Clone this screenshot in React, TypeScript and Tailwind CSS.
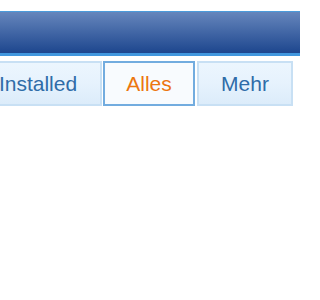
import React from 'react';

const tabs = [
  { label: 'Installed', width: 'w-[128px]', active: false },
  { label: 'Alles', width: 'w-[92px]', active: true },
  { label: 'Mehr', width: 'w-[96px]', active: false },
];

const App: React.FC = () => {
  return (
    <div className="w-[300px] h-[300px] overflow-hidden bg-white font-['Liberation_Sans',Arial,sans-serif]">
      {/* Header bar */}
      <div className="mt-[11px] h-[45px] border-t border-t-[#4b9bdb] border-b-[3px] border-b-[#4197de] bg-gradient-to-b from-[#6686bc] to-[#1d468e]" />

      {/* Tabs */}
      <div className="mt-[5px] ml-[-26px] flex gap-[1px]">
        {tabs.map((tab) => (
          <div
            key={tab.label}
            className={
              tab.active
                ? `${tab.width} mr-[1px] h-[45px] flex items-center justify-center border-2 border-[#72acdf] bg-[#f8fbfe] text-[21px] text-[#ec760f]`
                : `${tab.width} h-[45px] flex items-center justify-center border-2 border-[#c8e0f4] bg-gradient-to-b from-[#ecf6fe] via-[#e6f2fd] to-[#dcecfa] text-[21px] text-[#2f6ca8]`
            }
          >
            {tab.label}
          </div>
        ))}
      </div>
    </div>
  );
};

export default App;
